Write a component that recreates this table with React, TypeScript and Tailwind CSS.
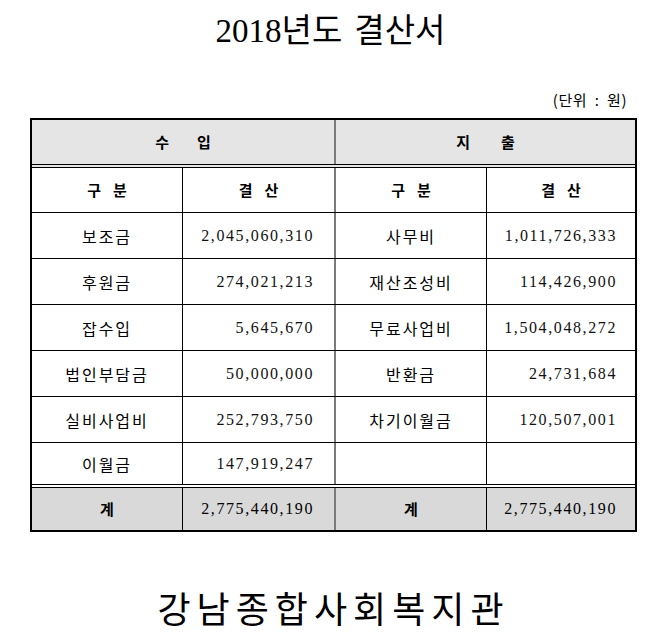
const KR = "font-['Noto_Sans_CJK_KR',sans-serif]";
const NUM = "font-['Liberation_Serif','Noto_Sans_CJK_KR',serif]";

type Line = {
  inName: string;
  inAmount: string;
  outName: string;
  outAmount: string;
};

const rows: Line[] = [
  { inName: "보조금", inAmount: "2,045,060,310", outName: "사무비", outAmount: "1,011,726,333" },
  { inName: "후원금", inAmount: "274,021,213", outName: "재산조성비", outAmount: "114,426,900" },
  { inName: "잡수입", inAmount: "5,645,670", outName: "무료사업비", outAmount: "1,504,048,272" },
  { inName: "법인부담금", inAmount: "50,000,000", outName: "반환금", outAmount: "24,731,684" },
  { inName: "실비사업비", inAmount: "252,793,750", outName: "차기이월금", outAmount: "120,507,001" },
  { inName: "이월금", inAmount: "147,919,247", outName: "", outAmount: "" },
];

const cols = "grid grid-cols-[151px_153px_151px_148px]";

function Cell({
  children,
  kind,
  className = "",
}: {
  children?: React.ReactNode;
  kind: "name" | "amount";
  className?: string;
}) {
  return (
    <div
      className={`flex items-center ${
        kind === "name"
          ? `justify-center ${KR} text-[16px] tracking-[2px] text-black`
          : `justify-end ${NUM} text-[16px] tracking-[1.6px] text-[#111]`
      } ${className}`}
    >
      {children}
    </div>
  );
}

function SubHead({ a, b, className = "" }: { a: string; b: string; className?: string }) {
  return (
    <div className={`flex items-center justify-center gap-[12px] ${KR} text-[15px] font-bold text-black ${className}`}>
      <span>{a}</span>
      <span>{b}</span>
    </div>
  );
}

export default function App() {
  return (
    <div className="h-[641px] w-[661px] overflow-hidden bg-white">
      <h1
        className={`flex justify-center gap-[12px] pt-[8px] ${KR} text-[33px] leading-[40px] text-black`}
      >
        <span>
          <span className={`${NUM} text-[33px]`}>2018</span>년도
        </span>
        <span>결산서</span>
      </h1>

      <div className={`mt-[39px] whitespace-pre pr-[34px] text-right ${KR} text-[15px] leading-[20px] tracking-[0.5px] text-black`}>
        (단위  :  원)
      </div>

      <div className="ml-[30px] mt-[8px] w-[607px] border-2 border-black">
        {/* 수입 / 지출 */}
        <div className="grid h-[48px] grid-cols-[304px_299px] border-b-4 border-double border-black bg-[#e5e5e5]">
          <div className={`flex items-center justify-center gap-[28px] border-r-2 border-[#7a7a7a] ${KR} text-[15px] font-bold`}>
            <span>수</span>
            <span>입</span>
          </div>
          <div className={`flex items-center justify-center gap-[31px] ${KR} text-[15px] font-bold`}>
            <span>지</span>
            <span>출</span>
          </div>
        </div>

        <div className={`${cols} h-[45px] border-b border-black`}>
          <SubHead a="구" b="분" className="border-r border-black" />
          <SubHead a="결" b="산" className="border-r-2 border-[#7a7a7a]" />
          <SubHead a="구" b="분" className="border-r border-black" />
          <SubHead a="결" b="산" />
        </div>

        {rows.map((r, i) => {
          const last = i === rows.length - 1;
          return (
            <div
              key={r.inName}
              className={`${cols} ${
                last ? "h-[45px] border-b-4 border-double" : "h-[46px] border-b"
              } border-black`}
            >
              <Cell kind="name" className="border-r border-black">
                {r.inName}
              </Cell>
              <Cell kind="amount" className="border-r-2 border-[#7a7a7a] pr-[20px]">
                {r.inAmount}
              </Cell>
              <Cell kind="name" className="border-r border-black">
                {r.outName}
              </Cell>
              <Cell kind="amount" className="pr-[18px]">
                {r.outAmount}
              </Cell>
            </div>
          );
        })}

        <div className={`${cols} h-[42px] bg-[#d9d9d9]`}>
          <div className={`flex items-center justify-center border-r border-black ${KR} text-[15px] font-bold`}>
            계
          </div>
          <Cell kind="amount" className="border-r-2 border-[#7a7a7a] pr-[20px] text-black">
            2,775,440,190
          </Cell>
          <div className={`flex items-center justify-center border-r border-black ${KR} text-[15px] font-bold`}>
            계
          </div>
          <Cell kind="amount" className="pr-[18px] text-black">
            2,775,440,190
          </Cell>
        </div>
      </div>

      <div
        className={`mt-[51px] pl-[6px] text-center ${KR} text-[36px] leading-[48px] tracking-[6px] text-black`}
      >
        강남종합사회복지관
      </div>
    </div>
  );
}
